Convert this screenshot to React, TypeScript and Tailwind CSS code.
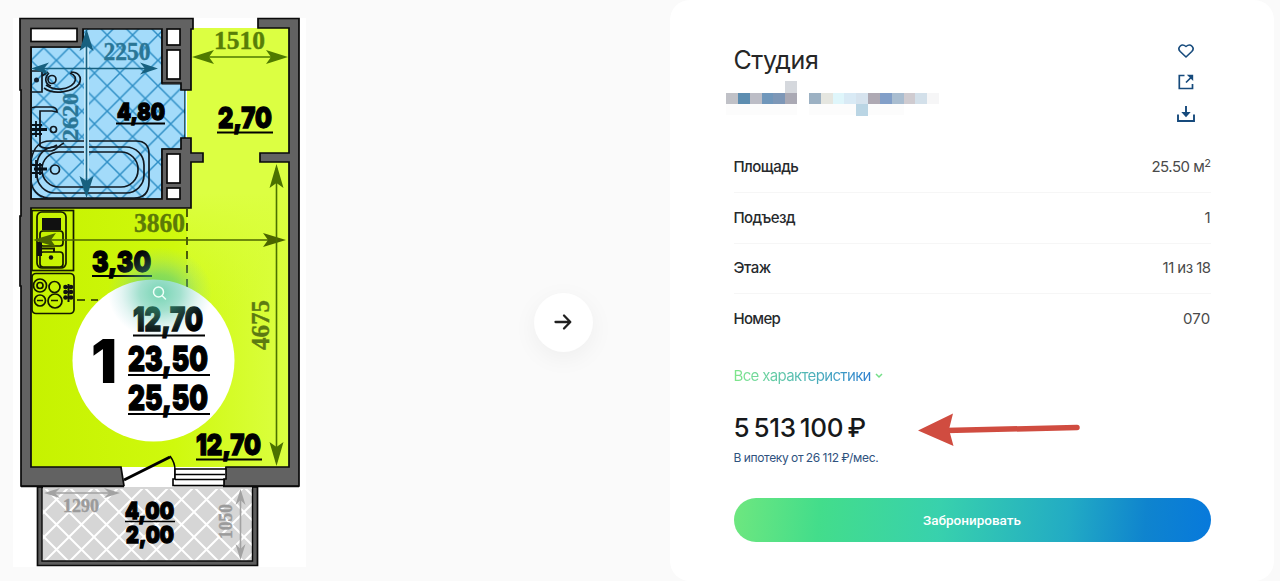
import { Fragment } from 'react';

const specs = [
  { label: 'Площадь', value: '25.50 м', sup: '2', labelClass: 'tracking-[-0.55px]', valueClass: 'tracking-[-0.5px]' },
  { label: 'Подъезд', value: '1', labelClass: 'tracking-[-0.6px]', valueClass: '' },
  { label: 'Этаж', value: '11 из 18', labelClass: 'tracking-[-0.45px]', valueClass: 'tracking-[-0.55px]' },
  { label: 'Номер', value: '070', labelClass: 'tracking-[-0.7px]', valueClass: 'tracking-[0.2px]' },
];

// [column, row, color]
const blocks: [number, number, string][] = [
  [5, 0, '#d5d8dd'],
  [0, 1, '#c0c1c7'], [1, 1, '#5d8db0'], [2, 1, '#bcbdc6'], [3, 1, '#7097bb'], [4, 1, '#7d97b7'], [5, 1, '#aaa9b4'],
  [7, 1, '#9cb1c3'], [8, 1, '#e5e6e0'], [9, 1, '#dff6fb'], [10, 1, '#d9eaf5'], [11, 1, '#d6e3ee'], [12, 1, '#aea9b3'],
  [13, 1, '#829fc8'], [14, 1, '#a9bdd0'], [15, 1, '#cfcbd0'], [16, 1, '#d3e0ea'], [17, 1, '#f6f6f7'],
  [11, 2, '#bad5e4'],
];

function HiddenAddress() {
  return (
    <svg className="-ml-[7.5px] mt-[7px] block" width="213" height="35" viewBox="0 0 18 3" preserveAspectRatio="none" shapeRendering="crispEdges">
      <rect x="0" y="2" width="6" height="0.9" fill="#fcfcfc" />
      <rect x="7" y="2" width="8" height="0.9" fill="#fcfcfc" />
      {blocks.map(([x, y, fill]) => (
        <rect key={`${x}-${y}`} x={x} y={y} width="1" height="1" fill={fill} />
      ))}
    </svg>
  );
}

// x and y are the left end of the baseline
function Area({ x, y, w, size, children }: { x: number; y: number; w: number; size: number; children: string }) {
  return (
    <text x={x} y={y} textLength={w} lengthAdjust="spacingAndGlyphs" fontSize={size} className="font-['Inter',sans-serif] font-black" fill="#000" stroke="#000" strokeWidth="1.3">
      {children}
    </text>
  );
}

function Size({ x, y, w, size, fill, vertical, children }: { x: number; y: number; w: number; size: number; fill: string; vertical?: boolean; children: string }) {
  return (
    <text
      transform={vertical ? `translate(${x} ${y}) rotate(-90)` : `translate(${x} ${y})`}
      textLength={w}
      lengthAdjust="spacingAndGlyphs"
      fontSize={size}
      fill={fill}
      stroke={fill}
      strokeWidth="0.4"
      className="font-['Liberation_Serif',serif] font-bold"
    >
      {children}
    </text>
  );
}

function Arrow({ x1, y1, x2, y2, color, head = 18, half = 7 }: { x1: number; y1: number; x2: number; y2: number; color: string; head?: number; half?: number }) {
  const len = Math.hypot(x2 - x1, y2 - y1);
  const angle = (Math.atan2(y2 - y1, x2 - x1) * 180) / Math.PI;
  return (
    <g transform={`translate(${x1} ${y1}) rotate(${angle})`} fill={color}>
      <path d={`M4 0H${len - 4}`} stroke={color} strokeWidth="1.6" />
      <path d={`M0 0L${head} ${-half}L${head - 5} 0L${head} ${half}Z`} />
      <path d={`M${len} 0L${len - head} ${-half}L${len - head + 5} 0L${len - head} ${half}Z`} />
    </g>
  );
}

function FloorPlan() {
  return (
    <svg className="block shrink-0" width="320" height="581" viewBox="0 0 320 581">
      <defs>
        <linearGradient id="room" gradientUnits="userSpaceOnUse" x1="31" y1="0" x2="290" y2="0">
          <stop offset="0" stopColor="#c6f200" />
          <stop offset="0.55" stopColor="#cff90d" />
          <stop offset="1" stopColor="#dbff42" />
        </linearGradient>
        <linearGradient id="hall" x1="0" x2="0" y1="0" y2="1">
          <stop offset="0" stopColor="#dcff42" />
          <stop offset="0.55" stopColor="#dcff42" />
          <stop offset="1" stopColor="#d6fd2c" stopOpacity="0" />
        </linearGradient>
        <pattern id="tiles" width="25.4" height="25.4" patternUnits="userSpaceOnUse" x="31" y="35">
          <rect width="25.4" height="25.4" fill="#a3dbfa" />
          <path d="M0 0L25.4 25.4M25.4 0L0 25.4" stroke="#2f8fc6" strokeWidth="1.5" />
        </pattern>
        <pattern id="balcony" width="25" height="25" patternUnits="userSpaceOnUse" x="44" y="487">
          <rect width="25" height="25" fill="#d6d6d6" />
          <path d="M0 0L25 25M25 0L0 25" stroke="#fff" strokeWidth="2" />
        </pattern>
        <radialGradient id="glow">
          <stop offset="0" stopColor="#35c08e" stopOpacity="0.68" />
          <stop offset="0.4" stopColor="#48c39e" stopOpacity="0.5" />
          <stop offset="0.75" stopColor="#6cc9bd" stopOpacity="0.18" />
          <stop offset="1" stopColor="#78cbd8" stopOpacity="0" />
        </radialGradient>
      </defs>

      <rect x="13" y="18" width="293" height="549" fill="#fff" />

      {/* rooms */}
      <rect x="31" y="205" width="259" height="262" fill="url(#room)" />
      <rect x="187" y="28" width="103" height="180" fill="url(#room)" />
      <rect x="187" y="28" width="103" height="300" fill="url(#hall)" />
      <path d="M31 47H83V28H162V84H185V149H162V199H31Z" fill="url(#tiles)" stroke="#000" strokeWidth="1.2" />

      {/* walls */}
      <g fill="#626262" stroke="#0a0a0a" strokeWidth="1.7">
        <path d="M20 18.500H193V29H191V90H181V83H162V29H83V47H31V199H162V149H181V138H191V153H203V162H191V208H31V467H121L124 486H21V286H20V216H21V90H20Z" />
        <path d="M258 18.500H299V486H223L226 467H289V162H260V153H289V28H258Z" />
      </g>
      <g fill="#fff" stroke="#0a0a0a" strokeWidth="1.7">
        <rect x="31" y="28.500" width="46" height="13" />
        <rect x="167" y="29" width="13" height="16" />
        <rect x="167" y="50" width="13" height="29" />
        <rect x="167" y="154" width="13" height="29" />
        <rect x="167" y="188" width="13" height="11" />
      </g>
      <path d="M194 18H257V28H194Z" fill="#fff" />
      <path d="M185.500 91V137" stroke="#4fa9c6" strokeWidth="1" />

      {/* bathroom */}
      <g fill="none" stroke="#101820" strokeWidth="1.7">
        <path d="M31 71H42V92H31M42 76L48 72M44 88C55 96 74 91 79 84C83 76 77 72 71 72M46 85C56 92 69 89 74 83C77 78 75 75 70 73" />
        <circle cx="52" cy="79.500" r="4" />
        <path d="M49 73C44 78 45 84 51 86M31 108L35 107H51Q57 107 57 112L52 111H40V146M39 145C43 150 53 148 57 145" />
        <circle cx="53.500" cy="129.500" r="3" />
        <path d="M31 160C34 145 41 141 50 141H136Q149 141 149 154V182Q149 198 134 198H48C37 197 32 189 31 181M31 151H51C56 151 59 145 64 143" />
        <rect x="37" y="147" width="107" height="46" rx="18" />
        <rect x="42" y="152" width="96" height="35" rx="17" />
        <circle cx="55" cy="169.500" r="4.500" />
      </g>
      <g stroke="#07131c" fill="none">
        <path d="M32 129.500H47M34 169H47" strokeWidth="3" />
        <path d="M36 121V137M40 124V136M32 125H42M32 134H42M36 160V178M40 163V175M32 165H43M32 173H43" strokeWidth="1.800" />
      </g>
      <circle cx="36.500" cy="80" r="2.500" fill="#123" />

      {/* kitchen */}
      <g fill="none" stroke="#141a00" strokeWidth="1.7">
        <rect x="32" y="210.500" width="41.500" height="60" />
        <rect x="37" y="212" width="29" height="56" rx="5" />
        <rect x="40" y="231" width="23" height="15" rx="3" />
        <rect x="40" y="252" width="23" height="15" rx="3" />
        <path d="M39 248.500H54V252" strokeWidth="2" />
        <rect x="32" y="273.500" width="42" height="40" rx="4" />
        <circle cx="40" cy="285.500" r="6.500" />
        <circle cx="40" cy="285.500" r="3" />
        <circle cx="54.500" cy="287" r="5.500" />
        <circle cx="40" cy="300.500" r="5.500" />
        <circle cx="55" cy="301" r="7" />
        <path d="M37 300.500H43M51 300.500H58" />
      </g>
      <path d="M42 218H61V230H42ZM37 242H42V256H37Z" fill="#111" />
      <circle cx="51" cy="257.500" r="2.200" fill="#111" />
      <g fill="#111">
        {[287, 292, 297.5].map((cy) => (
          <Fragment key={cy}>
            <circle cx="65.500" cy={cy} r="2.300" />
            <circle cx="71" cy={cy} r="2.300" />
            <rect x="64" y={cy - 1} width="9" height="2" />
          </Fragment>
        ))}
        <rect x="67.500" y="284" width="2" height="18" />
      </g>
      <path d="M187 209V291M77 300H98" stroke="#1f2800" strokeWidth="1.5" strokeDasharray="8 6" />

      {/* dimensions */}
      <path d="M86.500 48V178" stroke="#c6eafa" strokeWidth="5" />
      <Arrow x1={86.500} y1={29} x2={86.500} y2={198} color="#17607f" head={22} />
      <Arrow x1={31} y1={68.500} x2={158} y2={68.500} color="#17607f" head={18} half={6} />
      <Size x={103.500} y={60} w={47} size={26} fill="#2a7696">2250</Size>
      <Size x={78} y={141} w={48} size={24} fill="#2a7696" vertical>2620</Size>
      <Arrow x1={192} y1={57} x2={288} y2={57} color="#4f7a00" head={22} />
      <Size x={214} y={49} w={51} size={26} fill="#587e08">1510</Size>
      <Arrow x1={33} y1={240} x2={286} y2={240} color="#4b6500" head={23} />
      <Size x={134} y={232} w={51} size={27} fill="#5c7a07">3860</Size>
      <Arrow x1={276.500} y1={164} x2={276.500} y2={466} color="#4b7100" head={24} />
      <Size x={269} y={350} w={50} size={26} fill="#5c7a12" vertical>4675</Size>

      {/* center badge */}
      <circle cx="153.500" cy="360.500" r="81" fill="#fff" />
      <g stroke="#000" strokeWidth="1.8">
        <path d="M116 123.500H165M217 132.500H273M92 276H152M133 335.500H205M128 375H210M128 414H210M196 459.500H262" />
      </g>
      <Area x={117} y={120} w={48} size={23}>4,80</Area>
      <Area x={218} y={128} w={54} size={29}>2,70</Area>
      <Area x={92} y={272} w={59} size={29}>3,30</Area>
      <Area x={133} y={331} w={70} size={33}>12,70</Area>
      <Area x={128} y={371} w={80} size={34}>23,50</Area>
      <Area x={128} y={410} w={80} size={34}>25,50</Area>
      <Area x={196} y={455} w={65} size={29}>12,70</Area>
      <text x="91" y="383" fontSize="60" textLength="26" lengthAdjust="spacingAndGlyphs" className="font-['Inter',sans-serif] font-black">1</text>
      <ellipse cx="160" cy="293" rx="52" ry="46" fill="url(#glow)" />
      <g fill="none" stroke="#effff8" strokeWidth="1.5" strokeLinecap="round">
        <circle cx="158.500" cy="292" r="5" />
        <path d="M162.500 296L165.500 299" />
      </g>

      {/* balcony */}
      <path d="M37.500 487H257.500V565.500H37.500Z" fill="#5d5d5d" stroke="#0a0a0a" strokeWidth="1.7" />
      <path d="M42 487.500H252.500V561H42Z" fill="url(#balcony)" stroke="#0a0a0a" strokeWidth="1.4" />
      <path d="M43 486H252V489H43Z" fill="#d6d6d6" />
      <path d="M21 486.500H124M223 486.500H299" stroke="#0a0a0a" strokeWidth="1.7" />
      <path d="M125 467H174V487H125Z" fill="#fff" />
      <path d="M124 480L170 457" stroke="#000" strokeWidth="3" />
      <path d="M170 456C173 460 175 465 175 470V480" fill="none" stroke="#000" strokeWidth="1.500" />
      <path d="M175 469H226V479H224V485.500H173V479H175Z" fill="#fff" stroke="#000" strokeWidth="1.600" />
      <path d="M175 474.500H225M175 479.500H225" stroke="#000" strokeWidth="1.500" />
      <Arrow x1={44} y1={493} x2={120} y2={493} color="#a2a2a2" head={16} half={5} />
      <Arrow x1={240.500} y1={489} x2={240.500} y2={560} color="#a2a2a2" head={16} half={5} />
      <Size x={63} y={512} w={36} size={19} fill="#9b9b9b">1290</Size>
      <Size x={232} y={539} w={35} size={19} fill="#9b9b9b" vertical>1050</Size>
      <Area x={125} y={518.5} w={49} size={23.5}>4,00</Area>
      <path d="M125 521.500H175" stroke="#000" strokeWidth="1.500" />
      <Area x={126} y={543} w={48} size={23.5}>2,00</Area>
    </svg>
  );
}

function Actions() {
  return (
    <div className="mt-[42px] mr-[16px] flex flex-col gap-[14px] text-[#164a7c]">
      <button aria-label="favorite">
        <svg className="block" width="18" height="18" viewBox="0 0 18 18" fill="none" stroke="currentColor" strokeWidth="1.6" strokeLinejoin="round">
          <path d="M9 15L3.200 9.500C-0.200 6 4.300 0.500 9 4.500C13.700 0.500 18.200 6 14.800 9.500Z" />
        </svg>
      </button>
      <button aria-label="share">
        <svg className="block" width="18" height="18" viewBox="0 0 18 18" fill="none" stroke="currentColor" strokeWidth="1.7">
          <path d="M7.500 1.500H2.300V14.500H15.500V10M9 8.500L15 2.500" />
          <path d="M9.800 0.700H16.200V7Z" fill="currentColor" stroke="none" />
        </svg>
      </button>
      <button aria-label="download">
        <svg className="block" width="18" height="18" viewBox="0 0 18 18" fill="none" stroke="currentColor" strokeWidth="1.9">
          <path d="M1 8.500V15H17V8.500M9 0V8" />
          <path d="M4.300 6H13.700L9 11.200Z" fill="currentColor" stroke="none" />
        </svg>
      </button>
    </div>
  );
}

export default function App() {
  return (
    <div className="flex h-[581px] w-[1280px] overflow-hidden bg-[#fafafa] font-['Inter',sans-serif]">
      <section className="flex w-[670px] shrink-0 items-start">
        <FloorPlan />
        <button aria-label="next" className="mt-[292.500px] ml-[213.500px] flex size-[59px] items-center justify-center rounded-full bg-white shadow-[0_6px_24px_rgba(0,0,0,0.05)]">
          <svg width="18" height="18" viewBox="0 0 18 18" fill="none" stroke="#202020" strokeWidth="2.3" strokeLinecap="round" strokeLinejoin="round">
            <path d="M1.500 9H16M10 2.500L16.300 9L10 15.500" />
          </svg>
        </button>
      </section>

      <section className="flex h-full w-[604px] flex-col rounded-[20px] bg-white pr-[63.500px] pl-[63.500px]">
        <div className="flex h-[142.500px] shrink-0 justify-between">
          <div className="pt-[44px]">
            <h1 className="h-[30px] text-[25px] leading-[32px] tracking-[-0.45px] whitespace-nowrap text-[#262626]">Студия</h1>
            <HiddenAddress />
          </div>
          <Actions />
        </div>

        <dl className="flex h-[201.500px] shrink-0 flex-col divide-y divide-[#f6f6f6] text-[15px]">
          {specs.map((s) => (
            <div key={s.label} className="flex flex-1 items-center justify-between">
              <dt className={`font-medium text-[#26292c] ${s.labelClass}`}>{s.label}</dt>
              <dd className={`text-[#4a4a4a] ${s.valueClass}`}>
                {s.value}
                {s.sup && <sup className="-top-[5px] text-[11px]">{s.sup}</sup>}
              </dd>
            </div>
          ))}
        </dl>

        <button className="mt-[22px] flex h-5 items-center gap-1 self-start">
          <span className="bg-linear-to-r from-[#7fe68a] via-[#54b9b4] to-[#2f7fd0] bg-clip-text text-[15px] leading-5 tracking-[-0.65px] whitespace-nowrap text-transparent">Все характеристики</span>
          <svg width="8" height="6" viewBox="0 0 8 6" fill="none" stroke="#74df88" strokeWidth="1.500">
            <path d="M1 1L4 4L7 1" />
          </svg>
        </button>

        <div className="mt-[24px] flex h-[36px] items-center">
          <div className="w-[184px] text-[26px] leading-9 font-medium tracking-[-0.3px] [word-spacing:-2.5px] whitespace-nowrap text-[#17191b]">5 513 100 ₽</div>
          <svg className="block" width="164" height="36" viewBox="0 0 164 36" fill="#d04c40">
            <path d="M28 20.500L159 17.500" stroke="#d04c40" strokeWidth="5.500" strokeLinecap="round" />
            <path d="M0 20.500L35 3.500L31 19.500L35.500 36Z" />
          </svg>
        </div>
        <p className="mt-0.5 h-5 text-[12px] leading-5 tracking-[-0.3px] [word-spacing:-0.5px] whitespace-nowrap text-[#2f527e]">В ипотеку от 26 112 ₽/мес.</p>

        <button className="mt-[30px] h-[44px] w-full shrink-0 rounded-full bg-[linear-gradient(95deg,#6ee77f_0%,#43dd8b_18%,#38d1ad_43%,#22abc4_70%,#0f84ce_86%,#0779dc_100%)] font-['Roboto',sans-serif] text-[13.500px] font-medium text-white">
          Забронировать
        </button>
      </section>
    </div>
  );
}
